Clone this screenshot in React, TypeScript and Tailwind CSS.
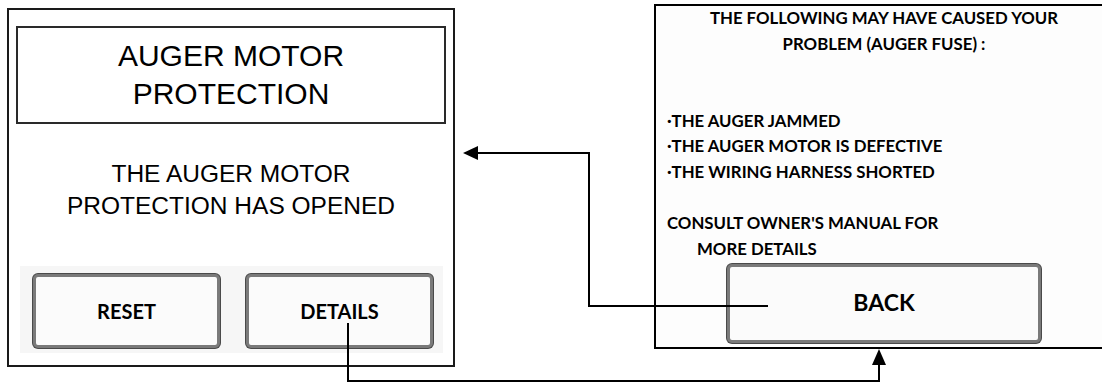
export default function App() {
  const panelFont = { fontFamily: '"Liberation Sans", Arial, sans-serif' }
  const screenFont = { fontFamily: 'Lato, "Open Sans", sans-serif' }

  return (
    <div className="relative w-[1102px] h-[383px] overflow-hidden bg-white text-black">
      <div className="flex items-start">
        {/* fault screen */}
        <div
          style={panelFont}
          className="ml-[7px] mt-[8px] w-[448px] h-[359px] shrink-0 border-2 border-[#1a1a1a] bg-white flex flex-col"
        >
          <div className="mx-[7px] mt-[16px] h-[98px] border-2 border-[#2a2a2a] flex flex-col items-center justify-center text-[30px] leading-[38px]">
            <span>AUGER MOTOR</span>
            <span>PROTECTION</span>
          </div>
          <div className="mt-[34px] flex flex-col items-center text-[24.5px] leading-[32px]">
            <span>THE AUGER MOTOR</span>
            <span>PROTECTION HAS OPENED</span>
          </div>
          <div
            style={screenFont}
            className="ml-[11px] mt-[44px] w-[423px] h-[87px] bg-[#f6f6f6] flex gap-[26px] pl-[13px] pt-[8px]"
          >
            <div className="w-[187px] h-[74px] rounded-[5px] border-[3px] border-[#7a7a7a] shadow-[0_0_0_1px_#4a4a4a] bg-[#fbfbfb] flex items-center justify-center text-[20px] font-bold">
              RESET
            </div>
            <div className="w-[187px] h-[74px] rounded-[5px] border-[3px] border-[#7a7a7a] shadow-[0_0_0_1px_#4a4a4a] bg-[#fbfbfb] flex items-center justify-center text-[20px] font-bold">
              DETAILS
            </div>
          </div>
        </div>

        {/* details screen, cut off at the right edge */}
        <div
          style={screenFont}
          className="ml-[199px] mt-[4px] w-[458px] h-[345px] shrink-0 border-y-2 border-l-2 border-r-0 border-black bg-[#fdfdfd] flex flex-col font-bold text-[16.8px] leading-[25.67px]"
        >
          <div className="-mt-[1px] flex flex-col items-center">
            <span>THE FOLLOWING MAY HAVE CAUSED YOUR</span>
            <span>PROBLEM (AUGER FUSE) :</span>
          </div>
          <div className="pl-[11px] mt-[51.3px] flex flex-col">
            <span>·THE AUGER JAMMED</span>
            <span>·THE AUGER MOTOR IS DEFECTIVE</span>
            <span>·THE WIRING HARNESS SHORTED</span>
            <span className="mt-[25.67px]">CONSULT OWNER'S MANUAL FOR</span>
            <span className="pl-[30px]">MORE DETAILS</span>
          </div>
          <div className="mx-auto mt-[2px] w-[314px] h-[79px] rounded-[5px] border-[3px] border-[#7a7a7a] shadow-[0_0_0_1px_#4a4a4a] bg-[#fbfbfb] flex items-center justify-center text-[23px] font-bold">
            BACK
          </div>
        </div>
      </div>

      {/* navigation arrows */}
      <svg className="absolute inset-0 pointer-events-none" width="1102" height="383" viewBox="0 0 1102 383">
        <path d="M348 323 V381 H879 V364" fill="none" stroke="#000" strokeWidth="2" />
        <polygon points="879,349 872,365 886,365" fill="#000" />
        <path d="M768 306 H589 V153 H477" fill="none" stroke="#000" strokeWidth="2" />
        <polygon points="463,153 478,146 478,160" fill="#000" />
      </svg>
    </div>
  )
}
